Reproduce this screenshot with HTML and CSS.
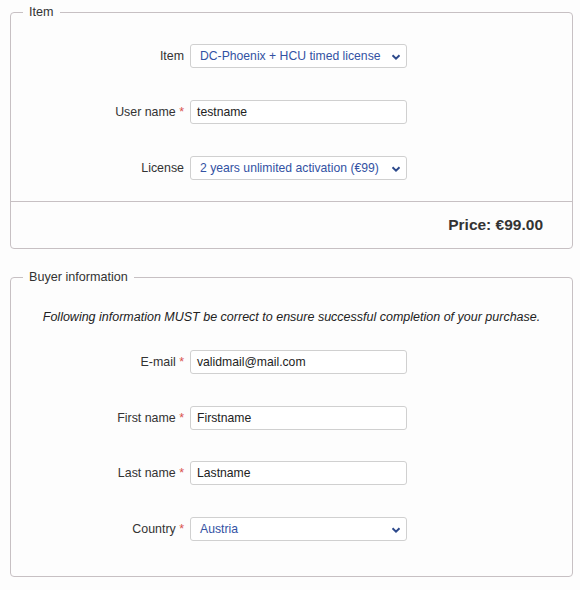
FILE: index.html
```html
<!DOCTYPE html>
<html lang="en">
<head>
<meta charset="utf-8">
<title>Purchase</title>
<link rel="stylesheet" href="styles.css">
</head>
<body>
<form class="page">
  <fieldset class="panel">
    <legend class="panel-title">Item</legend>
    <div class="rows rows-item">
      <div class="row">
        <label class="label">Item</label>
        <div class="select">
          <span class="select-value">DC-Phoenix + HCU timed license</span>
          <svg class="chevron" viewBox="0 0 10 8" width="10" height="8"><path d="M1.5 2.2 L5 5.6 L8.5 2.2" fill="none" stroke="#2d4a8c" stroke-width="2"/></svg>
        </div>
      </div>
      <div class="row">
        <label class="label">User name <span class="req">*</span></label>
        <div class="input">testname</div>
      </div>
      <div class="row">
        <label class="label">License</label>
        <div class="select">
          <span class="select-value">2 years unlimited activation (€99)</span>
          <svg class="chevron" viewBox="0 0 10 8" width="10" height="8"><path d="M1.5 2.2 L5 5.6 L8.5 2.2" fill="none" stroke="#2d4a8c" stroke-width="2"/></svg>
        </div>
      </div>
    </div>
    <div class="price">Price: €99.00</div>
  </fieldset>

  <fieldset class="panel">
    <legend class="panel-title">Buyer information</legend>
    <p class="note">Following information MUST be correct to ensure successful completion of your purchase.</p>
    <div class="rows rows-buyer">
      <div class="row">
        <label class="label">E-mail <span class="req">*</span></label>
        <div class="input">validmail@mail.com</div>
      </div>
      <div class="row">
        <label class="label">First name <span class="req">*</span></label>
        <div class="input">Firstname</div>
      </div>
      <div class="row">
        <label class="label">Last name <span class="req">*</span></label>
        <div class="input">Lastname</div>
      </div>
      <div class="row">
        <label class="label">Country <span class="req">*</span></label>
        <div class="select">
          <span class="select-value">Austria</span>
          <svg class="chevron" viewBox="0 0 10 8" width="10" height="8"><path d="M1.5 2.2 L5 5.6 L8.5 2.2" fill="none" stroke="#2d4a8c" stroke-width="2"/></svg>
        </div>
      </div>
    </div>
  </fieldset>
</form>
</body>
</html>
```

FILE: styles.css
```css
html, body {
  margin: 0;
  padding: 0;
  background: #fdfdfd;
}
body {
  font-family: Arial, "Liberation Sans", sans-serif;
  font-size: 12.4px;
  color: #333;
}
.page {
  display: flex;
  flex-direction: column;
  gap: 20px;
  padding: 4px 7px 0 10px;
  width: 563px;
}
.panel {
  margin: 0;
  padding: 0;
  border: 1px solid #c7c0c3;
  border-radius: 4px;
  min-width: 0;
}
.panel-title {
  margin-left: 12px;
  padding: 0 6px;
  font-size: 12.6px;
  line-height: 16px;
  color: #333;
}
.rows {
  display: flex;
  flex-direction: column;
  gap: 32px;
}
.rows-item {
  padding: 24px 0 21px;
}
.rows-buyer {
  gap: 31.67px;
  padding: 0 0 35px;
}
.row {
  display: grid;
  grid-template-columns: 173px 217px;
  column-gap: 6px;
  align-items: center;
}
.label {
  text-align: right;
  color: #333;
}
.req {
  color: #d9534f;
}
.input, .select {
  box-sizing: border-box;
  height: 24px;
  border: 1px solid #d0d0d0;
  border-radius: 3px;
  background: #fff;
  display: flex;
  align-items: center;
  font-size: 12.2px;
}
.input {
  padding: 0 6px;
  color: #222;
}
.select {
  position: relative;
  padding: 0 22px 0 9px;
  color: #3352a3;
  white-space: nowrap;
  overflow: hidden;
}
.chevron {
  position: absolute;
  right: 5px;
  top: 8px;
}
.price {
  border-top: 1px solid #c7c0c3;
  height: 46px;
  padding-right: 29px;
  display: flex;
  align-items: center;
  justify-content: flex-end;
  font-weight: bold;
  font-size: 15.5px;
  color: #333;
}
.note {
  margin: 25px 0 26px;
  text-align: center;
  font-style: italic;
  font-size: 12.5px;
  color: #222;
}
```
